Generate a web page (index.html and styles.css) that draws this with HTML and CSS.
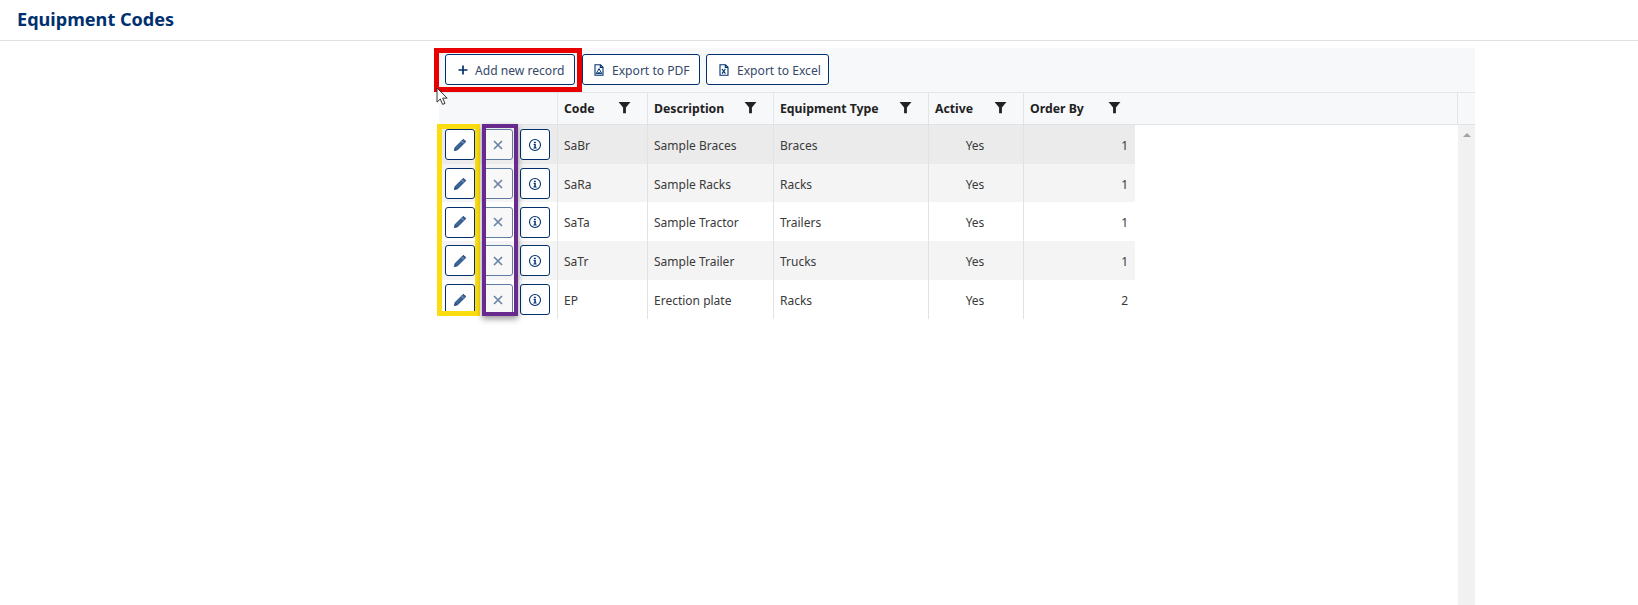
FILE: index.html
```html
<!DOCTYPE html>
<html lang="en">
<head>
<meta charset="utf-8">
<title>Equipment Codes</title>
<link rel="stylesheet" href="styles.css">
</head>
<body>
<header class="page-head"><h1 class="page-title">Equipment Codes</h1></header>
<main class="grid">
  <div class="toolbar">
    <button class="btn btn-add"><svg class="ico" viewBox="0 0 12 12"><path d="M6 1.5v9M1.5 6h9" stroke="currentColor" stroke-width="1.7" fill="none"/></svg><span>Add new record</span></button>
    <button class="btn btn-pdf"><svg class="ico" viewBox="0 0 12 12"><path d="M2 .8h5.5L10 3.3v7.9H2z M7.3 .8v2.7H10" fill="none" stroke="currentColor" stroke-width="1.1"/><path d="M3.2 9.6 6 4.6l2.8 5z M4.6 8.8h2.8" fill="none" stroke="currentColor" stroke-width="1"/></svg><span>Export to PDF</span></button>
    <button class="btn btn-xls"><svg class="ico" viewBox="0 0 12 12"><path d="M2 .8h5.5L10 3.3v7.9H2z M7.3 .8v2.7H10" fill="none" stroke="currentColor" stroke-width="1.1"/><path d="M4 5l3.4 4.6M7.4 5 4 9.6" fill="none" stroke="currentColor" stroke-width="1.2"/></svg><span>Export to Excel</span></button>
  </div>

  <div class="cols head">
    <div class="hcell"></div>
    <div class="hcell"><b>Code</b><svg class="funnel" viewBox="0 0 12 12"><path d="M.5 1h11L7.3 6v5.2H4.7V6z"/></svg></div>
    <div class="hcell"><b>Description</b><svg class="funnel" viewBox="0 0 12 12"><path d="M.5 1h11L7.3 6v5.2H4.7V6z"/></svg></div>
    <div class="hcell"><b>Equipment Type</b><svg class="funnel" viewBox="0 0 12 12"><path d="M.5 1h11L7.3 6v5.2H4.7V6z"/></svg></div>
    <div class="hcell"><b>Active</b><svg class="funnel" viewBox="0 0 12 12"><path d="M.5 1h11L7.3 6v5.2H4.7V6z"/></svg></div>
    <div class="hcell hlast"><b>Order By</b><svg class="funnel" viewBox="0 0 12 12"><path d="M.5 1h11L7.3 6v5.2H4.7V6z"/></svg></div>
    <div class="hcell hfill"></div>
    <div class="hcell hend"></div>
  </div>

  <div class="body">
    <div class="rows">
      <div class="cols row row-sel">
        <div class="cell cmd"><button class="btn-i"><svg viewBox="0 0 14 14"><use href="#pencil"/></svg></button><button class="btn-i btn-del"><svg viewBox="0 0 14 14"><use href="#cross"/></svg></button><button class="btn-i"><svg viewBox="0 0 14 14"><use href="#info"/></svg></button></div>
        <div class="cell">SaBr</div><div class="cell">Sample Braces</div><div class="cell">Braces</div><div class="cell mid">Yes</div><div class="cell num">1</div>
      </div>
      <div class="cols row row-alt">
        <div class="cell cmd"><button class="btn-i"><svg viewBox="0 0 14 14"><use href="#pencil"/></svg></button><button class="btn-i btn-del"><svg viewBox="0 0 14 14"><use href="#cross"/></svg></button><button class="btn-i"><svg viewBox="0 0 14 14"><use href="#info"/></svg></button></div>
        <div class="cell">SaRa</div><div class="cell">Sample Racks</div><div class="cell">Racks</div><div class="cell mid">Yes</div><div class="cell num">1</div>
      </div>
      <div class="cols row">
        <div class="cell cmd"><button class="btn-i"><svg viewBox="0 0 14 14"><use href="#pencil"/></svg></button><button class="btn-i btn-del"><svg viewBox="0 0 14 14"><use href="#cross"/></svg></button><button class="btn-i"><svg viewBox="0 0 14 14"><use href="#info"/></svg></button></div>
        <div class="cell">SaTa</div><div class="cell">Sample Tractor</div><div class="cell">Trailers</div><div class="cell mid">Yes</div><div class="cell num">1</div>
      </div>
      <div class="cols row row-alt">
        <div class="cell cmd"><button class="btn-i"><svg viewBox="0 0 14 14"><use href="#pencil"/></svg></button><button class="btn-i btn-del"><svg viewBox="0 0 14 14"><use href="#cross"/></svg></button><button class="btn-i"><svg viewBox="0 0 14 14"><use href="#info"/></svg></button></div>
        <div class="cell">SaTr</div><div class="cell">Sample Trailer</div><div class="cell">Trucks</div><div class="cell mid">Yes</div><div class="cell num">1</div>
      </div>
      <div class="cols row">
        <div class="cell cmd"><button class="btn-i"><svg viewBox="0 0 14 14"><use href="#pencil"/></svg></button><button class="btn-i btn-del"><svg viewBox="0 0 14 14"><use href="#cross"/></svg></button><button class="btn-i"><svg viewBox="0 0 14 14"><use href="#info"/></svg></button></div>
        <div class="cell">EP</div><div class="cell">Erection plate</div><div class="cell">Racks</div><div class="cell mid">Yes</div><div class="cell num">2</div>
      </div>
    </div>
    <div class="scrollbar"><span class="arrow-up"></span></div>
  </div>

  <div class="mark mark-red"></div>
  <div class="mark mark-yellow"></div>
  <div class="mark mark-purple"></div>
  <svg class="cursor" viewBox="0 0 13 19"><path d="M1 1v14l3.3-3 2.3 5.4 2.4-1-2.3-5.3h4.5z" fill="#fff" stroke="#333" stroke-width="1"/></svg>
</main>

<svg class="defs" width="0" height="0">
  <symbol id="pencil" viewBox="0 0 14 14"><path d="M1.4 12.6l.8-3.2L9.9 1.7a.8.8 0 0 1 1.1 0l1.3 1.3a.8.8 0 0 1 0 1.1L4.6 11.8z" fill="#3d6496" stroke="#00306f" stroke-width=".8"/><path d="M8.6 3.1l2.3 2.3" stroke="#dfe6ef" stroke-width=".6"/></symbol>
  <symbol id="cross" viewBox="0 0 14 14"><path d="M3 3l8 8M11 3l-8 8" stroke="currentColor" stroke-width="1.7" fill="none"/></symbol>
  <symbol id="info" viewBox="0 0 14 14"><circle cx="7" cy="7" r="5.5" fill="none" stroke="currentColor" stroke-width="1.1"/><path d="M5.9 3.7h1.9v1.5H5.9z M5.6 6h2.2v3.5h.8v1H5.4v-1h.9V7h-.7z" fill="currentColor"/></symbol>
</svg>
</body>
</html>
```
FILE: styles.css
```css
* { box-sizing: border-box; }
html, body { margin: 0; height: 100%; }
body {
  display: flex;
  flex-direction: column;
  overflow: hidden;
  background: #fff;
  font-family: "Noto Sans", "Open Sans", sans-serif;
  font-size: 12px;
  color: #3a3a3a;
}
.page-head {
  height: 41px;
  flex: none;
  padding: 7px 0 0 17px;
  border-bottom: 1px solid #dfe1e5;
}
.page-title {
  margin: 0;
  font-size: 18.1px;
  line-height: 24px;
  font-weight: 700;
  color: #00306f;
}
.grid {
  position: relative;
  flex: 1;
  display: flex;
  flex-direction: column;
  width: 1036px;
  margin: 7px 0 0 439px;
  min-height: 0;
}
.toolbar {
  height: 44px;
  flex: none;
  display: flex;
  align-items: flex-start;
  gap: 6px;
  padding: 6px 0 0 6px;
  background: #f7f8fa;
}
.btn {
  height: 31px;
  display: flex;
  align-items: center;
  gap: 7px;
  padding: 2px 0 0;
  border: 1px solid #00306f;
  border-radius: 3px;
  background: #fff;
  color: #00306f;
  font: inherit;
  font-size: 12.1px;
}
.btn span { color: #33486a; }
.btn-add { width: 130px; padding-left: 11px; gap: 6px; }
.btn-pdf { width: 118px; padding-left: 10px; margin-left: 1px; }
.btn-xls { width: 123px; padding-left: 11px; }
.ico { width: 12px; height: 12px; flex: none; margin-top: -2px; }
.cols {
  display: grid;
  grid-template-columns: 119px 90px 126px 155px 95px 111px;
}
.head {
  height: 33px;
  flex: none;
  grid-template-columns: 119px 90px 126px 155px 95px 111px 1fr 17px;
  background: #f7f8fa;
  border-top: 1px solid #e3e6ea;
  border-bottom: 1px solid #dfe3e8;
  font-size: 12.25px;
}
.hcell {
  display: flex;
  align-items: center;
  justify-content: space-between;
  padding: 0 16px 0 6px;
  border-right: 1px solid #e1e4e8;
  color: #222;
}
.hcell b { font-weight: 700; }
.hlast { border-right: 0; padding-right: 14px; }
.hend { border-right: 0; }
.funnel { width: 13px; height: 13px; fill: #222; margin-bottom: 2px; flex: none; }
.body { flex: 1; display: flex; min-height: 0; }
.rows { flex: 1; height: 194px; overflow: hidden; }
.row { height: 38.7px; width: 696px; }
.row:last-child { height: 39.5px; }
.row-sel { background: #ebebeb; }
.row-alt { background: #f4f4f4; }
.cell {
  display: flex;
  align-items: center;
  padding: 2px 7px 0 6px;
  border-right: 1px solid #e2e2e2;
  white-space: nowrap;
}
.cell:last-child { border-right: 0; }
.mid { justify-content: center; padding-left: 0; padding-right: 2px; }
.num { justify-content: flex-end; }
.cmd { gap: 7.5px; padding: 1px 0 0 6px; border-right: 1px solid #e2e2e2; }
.row:last-child .cmd { padding-top: 0; }
.btn-i {
  width: 30px;
  height: 31px;
  flex: none;
  display: flex;
  align-items: center;
  justify-content: center;
  padding: 0;
  border: 1px solid #00306f;
  border-radius: 3px;
  background: #fff;
  color: #00306f;
}
.btn-i svg { width: 14px; height: 14px; }
.btn-del {
  border-color: #5d7ba3;
  background: #f8f8f8;
  color: #6b84a6;
}
.scrollbar {
  width: 17px;
  flex: none;
  display: flex;
  justify-content: center;
  padding-top: 8px;
  background: #f1f1f1;
}
.arrow-up {
  width: 0;
  height: 0;
  border: 4px solid transparent;
  border-top: 0;
  border-bottom: 4px solid #a3a3a3;
}
.mark { position: absolute; pointer-events: none; }
.mark-red { left: -5px; top: 0; width: 148px; height: 44px; border: 5px solid #e80000; }
.mark-yellow { left: -2px; top: 76px; width: 43px; height: 192px; border: 5px solid #fbdc10; }
.mark-purple { left: 43px; top: 76px; width: 36px; height: 192px; border: 4px solid #682a8c; box-shadow: 0 3px 6px rgba(0,0,0,.4); }
.cursor { position: absolute; left: -3px; top: 39px; width: 13px; height: 19px; }
.defs { position: absolute; }
```
